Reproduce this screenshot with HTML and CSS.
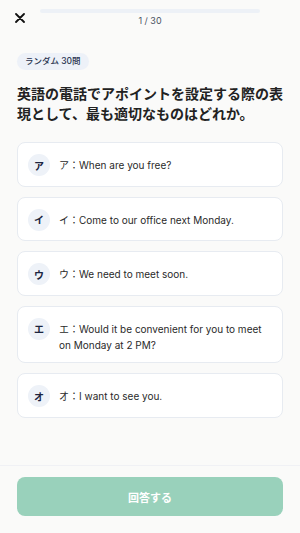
FILE: index.html
```html
<!DOCTYPE html>
<html lang="ja">
<head>
    <meta charset="utf-8">
    <title>クイズ</title>
    <link rel="stylesheet" href="styles.css">
</head>
<body>
    <div class="page">
        <div class="header">
            <svg class="close" viewBox="0 0 10 10" width="10" height="10">
                <path d="M1 1 L9 9 M9 1 L1 9" stroke="#111" stroke-width="1.8" stroke-linecap="round"/>
            </svg>
            <div class="progress">
                <div class="bar"></div>
                <div class="count">1 / 30</div>
            </div>
        </div>

        <div class="main">
            <div class="tag">ランダム 30問</div>
            <h1 class="question">英語の電話でアポイントを設定する際の表現として、最も適切なものはどれか。</h1>

            <div class="options">
                <div class="option">
                    <span class="mark">ア</span>
                    <span class="text">ア：When are you free?</span>
                </div>
                <div class="option">
                    <span class="mark">イ</span>
                    <span class="text">イ：Come to our office next Monday.</span>
                </div>
                <div class="option">
                    <span class="mark">ウ</span>
                    <span class="text">ウ：We need to meet soon.</span>
                </div>
                <div class="option">
                    <span class="mark">エ</span>
                    <span class="text">エ：Would it be convenient for you to meet on Monday at 2 PM?</span>
                </div>
                <div class="option">
                    <span class="mark">オ</span>
                    <span class="text">オ：I want to see you.</span>
                </div>
            </div>
        </div>

        <div class="footer">
            <button class="answer" disabled>回答する</button>
        </div>
    </div>
</body>
</html>
```

FILE: styles.css
```css
body {
    margin: 0;
    background-color: #fafaf9;
    font-family: 'Inter', 'Noto Sans CJK JP', sans-serif;
    color: #222;
}

.page {
    display: flex;
    flex-direction: column;
    height: 100vh;
}

.header {
    display: flex;
    align-items: flex-start;
    padding: 9px 0 0 15px;
}

.close {
    margin-top: 4px;
    flex-shrink: 0;
}

.progress {
    margin-left: 15px;
    width: 220px;
}

.bar {
    height: 4px;
    border-radius: 2px;
    background-color: #edf1f7;
}

.count {
    margin-top: 2px;
    text-align: center;
    font-size: 9px;
    line-height: 12px;
    color: #4a5263;
}

.main {
    flex: 1;
    padding: 26px 17px 0 17px;
}

.tag {
    width: fit-content;
    height: 17px;
    line-height: 17px;
    padding: 0 8px;
    border-radius: 9px;
    background-color: #edf1f8;
    color: #27324d;
    font-size: 8.5px;
    font-weight: 500;
}

.question {
    margin: 14px 0 18px 0;
    font-size: 14px;
    line-height: 20px;
    font-weight: 700;
    color: #222;
}

.options {
    display: flex;
    flex-direction: column;
    gap: 10px;
}

.option {
    display: flex;
    align-items: flex-start;
    gap: 9px;
    padding: 11px 12px 9.5px 10px;
    background-color: #fff;
    border: 1px solid #e7ebf1;
    border-radius: 8px;
}

.mark {
    flex-shrink: 0;
    width: 22px;
    height: 22px;
    border-radius: 50%;
    background-color: #eef2f8;
    color: #1c2540;
    font-size: 10px;
    font-weight: 700;
    display: flex;
    align-items: center;
    justify-content: center;
}

.text {
    padding-top: 3px;
    font-size: 10px;
    line-height: 16px;
    color: #2a2a2a;
}

.footer {
    border-top: 1px solid #f0f1f5;
    padding: 11px 17px 17px 17px;
}

.answer {
    display: block;
    width: 100%;
    height: 39px;
    border: none;
    border-radius: 8px;
    background-color: #99d1bb;
    color: #fff;
    font-family: 'Inter', 'Noto Sans CJK JP', sans-serif;
    font-size: 11px;
    font-weight: 700;
}
```
